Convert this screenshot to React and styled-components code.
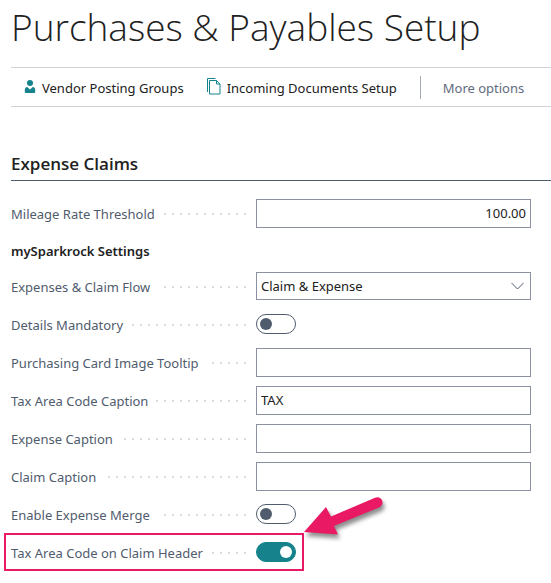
import React, { useState } from "react";
import styled, { createGlobalStyle } from "styled-components";

const App = () => {
    const [values, setValues] = useState({
        threshold: "100.00",
        flow: "Claim & Expense",
        details: false,
        tooltip: "",
        taxCaption: "TAX",
        expenseCaption: "",
        claimCaption: "",
        merge: false,
        taxHeader: true,
    });

    const change = (name, value) => setValues({ ...values, [name]: value });

    const textField = (name, label, align) => (
        <Field id={name} label={label}>
            <TextBox id={name} type="text" $align={align} value={values[name]} onChange={(e) => change(name, e.target.value)} />
        </Field>
    );

    const switchField = (name, label, highlighted) => (
        <Field id={name} label={label} highlighted={highlighted}>
            <Switch id={name} type="checkbox" role="switch" checked={values[name]} onChange={(e) => change(name, e.target.checked)} />
        </Field>
    );

    return (
        <Page>
            <GlobalStyle />
            <Title>Purchases &amp; Payables Setup</Title>
            <Toolbar>
                <Action type="button">
                    <PersonIcon />
                    Vendor Posting Groups
                </Action>
                <Action type="button">
                    <DocumentsIcon />
                    Incoming Documents Setup
                </Action>
                <MoreOptions type="button">More options</MoreOptions>
            </Toolbar>
            <SectionTitle>Expense Claims</SectionTitle>
            <Fields>
                {textField("threshold", "Mileage Rate Threshold", "right")}
                <GroupTitle>mySparkrock Settings</GroupTitle>
                <Field id="flow" label="Expenses & Claim Flow">
                    <SelectWrap>
                        <Select id="flow" value={values.flow} onChange={(e) => change("flow", e.target.value)}>
                            <option>Claim &amp; Expense</option>
                            <option>Claim</option>
                            <option>Expense</option>
                        </Select>
                        <Chevron />
                    </SelectWrap>
                </Field>
                {switchField("details", "Details Mandatory")}
                {textField("tooltip", "Purchasing Card Image Tooltip")}
                {textField("taxCaption", "Tax Area Code Caption")}
                {textField("expenseCaption", "Expense Caption")}
                {textField("claimCaption", "Claim Caption")}
                {switchField("merge", "Enable Expense Merge")}
                {switchField("taxHeader", "Tax Area Code on Claim Header", true)}
            </Fields>
        </Page>
    );
};

export default App;

const Field = ({ id, label, highlighted, children }) => (
    <Row>
        <LabelCell>
            <Label htmlFor={id}>{label}</Label>
            <Dots />
        </LabelCell>
        {children}
        {highlighted && <Highlight />}
        {highlighted && <Arrow />}
    </Row>
);

const PersonIcon = () => (
    <svg width="12" height="14" viewBox="0 0 12 14" fill="#15828c" aria-hidden="true">
        <circle cx="6" cy="3" r="3" />
        <path d="M3.2 7 6 9.6 8.8 7C10.5 7.3 11.2 8.4 11.2 10v2q0 1-1 1H1.8q-1 0-1-1v-2C.8 8.4 1.5 7.3 3.2 7z" />
    </svg>
);

const DocumentsIcon = () => (
    <svg width="14" height="17" viewBox="0 0 14 17" fill="none" stroke="#15828c" aria-hidden="true">
        <path d="M.5 14V.5h8" />
        <path d="M2.5 2.5h7L13 6v10H2.5z" />
        <path d="M9.5 2.5V6H13" />
    </svg>
);

const Chevron = () => (
    <ChevronSvg width="13" height="8" viewBox="0 0 13 8" fill="none" stroke="#505c6d" aria-hidden="true">
        <path d="M.5 1l6 6 6-6" />
    </ChevronSvg>
);

const Arrow = () => (
    <ArrowSvg width="90" height="60" viewBox="0 0 90 60" fill="#e91963" aria-hidden="true">
        <path d="M0 39 22 14l5 9.500L71 4.800a5 5 0 0 1 4.500 9.500L30 33l4 8.500z" />
    </ArrowSvg>
);

const GlobalStyle = createGlobalStyle`
    * {
        box-sizing: border-box;
    }

    body {
        margin: 0;
        background: #fff;
        color: #212121;
        font-family: "Noto Sans", "Open Sans", sans-serif;
        font-size: 13px;
        line-height: 20px;
    }

    button, input, select {
        font: inherit;
        color: inherit;
    }
`;

const Page = styled.main`
    padding: 3px 0 12px 11px;
`;

const Title = styled.h1`
    margin: 0 0 16px;
    font-family: "Open Sans", sans-serif;
    font-size: 37px;
    font-weight: 300;
    line-height: 48px;
    white-space: nowrap;
`;

const Toolbar = styled.div`
    display: flex;
    align-items: center;
    gap: 23px;
    height: 40px;
    padding-left: 13px;
    border-top: 1px solid #d0d3d8;
    border-bottom: 1px solid #d0d3d8;
`;

const Action = styled.button`
    display: flex;
    align-items: center;
    gap: 6px;
    padding: 2px 0 0;
    border: 0;
    background: none;
    white-space: nowrap;
    cursor: pointer;

    svg {
        margin-bottom: 3px;
    }
`;

const MoreOptions = styled(Action)`
    height: 23px;
    padding-left: 22px;
    border-left: 1px solid #a5abb5;
    color: #5f6b7e;
`;

const SectionTitle = styled.h2`
    margin: 44px 0 13px;
    padding-bottom: 3px;
    border-bottom: 1px solid #505c6d;
    font-family: "Open Sans", sans-serif;
    font-size: 17px;
    font-weight: 600;
    line-height: 26px;
`;

const Fields = styled.div`
    padding-right: 20px;
`;

const Row = styled.div`
    position: relative;
    display: flex;
    align-items: center;
    height: 38px;
`;

const LabelCell = styled.div`
    display: flex;
    align-items: center;
    flex: none;
    width: 245px;
    padding: 2px 10px 0 0;
`;

const Label = styled.label`
    color: #505c6d;
    white-space: nowrap;
`;

const Dots = styled.span`
    flex: 1;
    height: 2px;
    margin-left: 8px;
    background: repeating-linear-gradient(to left, #d9dbde 0 2px, transparent 2px 8px);
`;

const GroupTitle = styled.h3`
    margin: 0;
    padding-top: 4px;
    font-size: 13px;
    font-weight: 600;
    line-height: 31px;
`;

const TextBox = styled.input`
    flex: 1;
    min-width: 0;
    height: 29px;
    padding: 0 4px;
    border: 1px solid #8b91a0;
    border-radius: 0;
    background: #fff;
    text-align: ${(props) => props.$align || "left"};
`;

const SelectWrap = styled.div`
    position: relative;
    display: flex;
    flex: 1;
`;

const Select = styled.select`
    appearance: none;
    width: 100%;
    height: 28px;
    padding: 0 24px 0 4px;
    border: 1px solid #8b91a0;
    border-radius: 0;
    background: #fff;
`;

const ChevronSvg = styled.svg`
    position: absolute;
    top: 10px;
    right: 7px;
    pointer-events: none;
`;

const Switch = styled.input`
    appearance: none;
    display: flex;
    align-items: center;
    width: 40px;
    height: 20px;
    margin: 0;
    padding: 0 3px;
    border: 1px solid ${(props) => (props.checked ? "#15828c" : "#505c6d")};
    border-radius: 10px;
    background: ${(props) => (props.checked ? "#15828c" : "#fff")};
    cursor: pointer;

    &::before {
        content: "";
        width: 12px;
        height: 12px;
        margin-left: ${(props) => (props.checked ? "auto" : "0")};
        border-radius: 50%;
        background: ${(props) => (props.checked ? "#fff" : "#505c6d")};
    }
`;

const Highlight = styled.span`
    position: absolute;
    top: 0;
    bottom: 0;
    left: -7px;
    width: 300px;
    border: 2px solid #e91963;
    pointer-events: none;
`;

const ArrowSvg = styled.svg`
    position: absolute;
    top: -40px;
    left: 293px;
    filter: drop-shadow(2px 4px 2px rgba(0, 0, 0, 0.45));
    pointer-events: none;
`;
